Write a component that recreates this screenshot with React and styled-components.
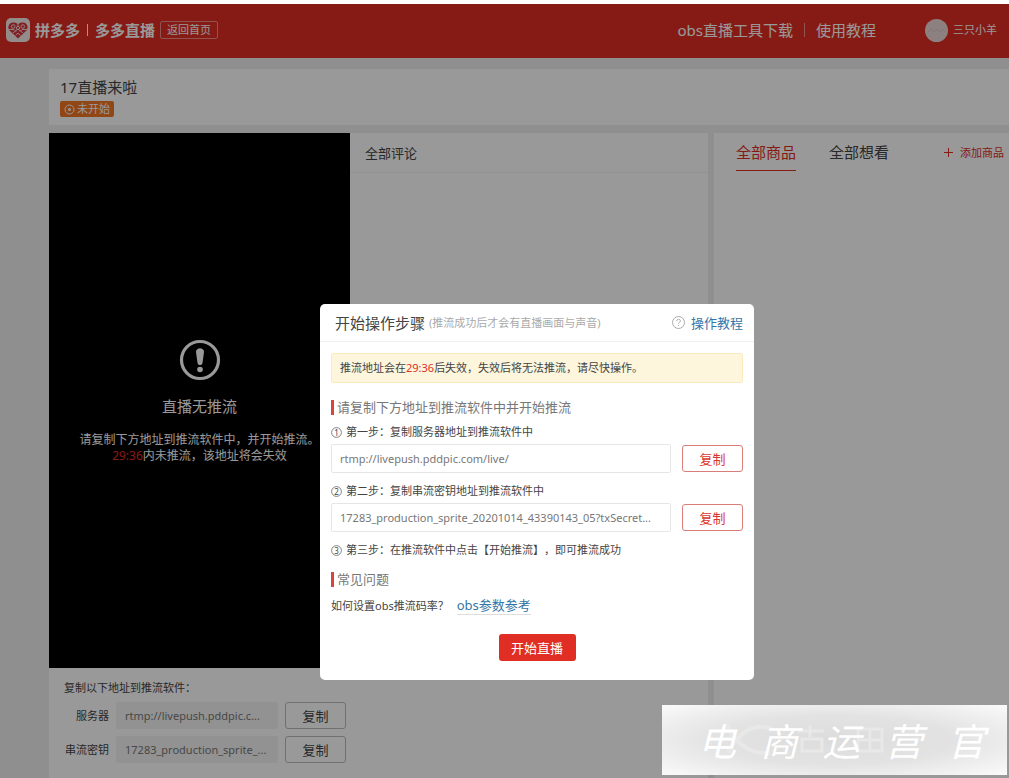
import React, { useState } from 'react';
import styled, { createGlobalStyle } from 'styled-components';

const GlobalStyle = createGlobalStyle`
  * {
    box-sizing: border-box;
  }

  body {
    margin: 0;
    background: #fff;
    color: #444;
    font-family: "Noto Sans", "Noto Sans CJK SC", sans-serif;
    font-size: 11px;
    line-height: 16px;
    text-spacing-trim: space-all;
  }

  h1, h2, h3, p, ol {
    margin: 0;
    padding: 0;
    font-weight: 400;
  }

  button, input {
    font-family: inherit;
  }

  a {
    text-decoration: none;
  }
`;

const Screen = styled.div`
  position: relative;
  display: flex;
  flex-direction: column;
  min-height: calc(100vh - 4px);
  margin-top: 4px;
  background: #eee;
  overflow: hidden;
`;

const HeaderBar = styled.header`
  display: flex;
  align-items: center;
  height: 54px;
  padding: 0 12px 2px 6px;
  background: #e02e24;
  color: #fff;
`;

const Brand = styled.div`
  display: flex;
  align-items: center;
  gap: 5px;
  font-size: 15px;
  font-weight: 700;
`;

const BrandDivider = styled.span`
  width: 1px;
  height: 12px;
  margin: 0 2px;
  background: #fff;
`;

const HomeButton = styled.button`
  height: 18px;
  margin-left: 5px;
  padding: 0 6px;
  border: 1px solid #f08a84;
  border-radius: 2px;
  background: none;
  color: #fff;
  font-size: 11px;
  line-height: 16px;
`;

const HeaderNav = styled.nav`
  display: flex;
  align-items: center;
  gap: 11px;
  margin-left: auto;
`;

const NavLink = styled.a`
  color: #fff;
  font-size: 15px;
  line-height: 24px;
`;

const NavDivider = styled.span`
  width: 1px;
  height: 14px;
  background: #f08a84;
`;

const User = styled.div`
  display: flex;
  align-items: center;
  gap: 5px;
  margin-left: 49px;
`;

const Avatar = styled.span`
  display: grid;
  place-items: center;
  width: 23px;
  height: 23px;
  border-radius: 50%;
  background: #ecd6d6;
`;

const Main = styled.main`
  flex: 1;
  display: flex;
  flex-direction: column;
  gap: 8px;
  padding: 11px 0 0 49px;
`;

const TitlePanel = styled.section`
  height: 56px;
  padding: 7px 11px;
  background: #fff;
`;

const LiveTitle = styled.h1`
  font-size: 15px;
  line-height: 22px;
`;

const StatusTag = styled.span`
  display: flex;
  align-items: center;
  gap: 2px;
  width: max-content;
  height: 16px;
  margin-top: 3px;
  padding: 0 4px;
  border-radius: 2px;
  background: #f27524;
  color: #fff;
`;

const Columns = styled.div`
  flex: 1;
  display: grid;
  grid-template-columns: minmax(0, 659fr) minmax(0, 295fr);
  gap: 6px;
`;

const LivePanel = styled.section`
  display: grid;
  grid-template-columns: 301px minmax(0, 1fr);
  grid-template-rows: 535px auto;
  background: #fff;
`;

const Video = styled.div`
  display: flex;
  flex-direction: column;
  align-items: center;
  padding-top: 206px;
  background: #000;
  color: #fff;
  font-size: 12px;
  text-align: center;
  white-space: nowrap;
`;

const VideoTitle = styled.h2`
  margin: 14px 0 15px;
  font-size: 15px;
  line-height: 22px;
`;

const Red = styled.span`
  color: #e02e24;
`;

const PanelTitle = styled.h2`
  height: 40px;
  padding: 0 15px;
  border-bottom: 1px solid #f4f4f4;
  font-size: 13px;
  line-height: 40px;
`;

const Addresses = styled.div`
  grid-column: 1 / -1;
  display: flex;
  flex-direction: column;
  gap: 7px;
  padding: 13px 15px;
  line-height: 14px;
`;

const AddressRow = styled.div`
  display: grid;
  grid-template-columns: 45px 162px 61px;
  align-items: center;
  column-gap: 7px;

  label {
    text-align: right;
  }
`;

const TextField = styled.input`
  min-width: 0;
  width: 100%;
  height: ${props => props.$filled ? '27px' : '29px'};
  padding: 0 8px;
  border: 1px solid ${props => props.$filled ? '#f4f4f4' : '#e6e6e6'};
  border-radius: 2px;
  background: ${props => props.$filled ? '#f4f4f4' : '#fff'};
  color: #777;
  font-size: 11px;
`;

const CopyButton = styled.button`
  height: 27px;
  padding: 0;
  border: 1px solid ${props => props.$primary ? '#d97d78' : '#bbb'};
  border-radius: 3px;
  background: #fff;
  color: ${props => props.$primary ? '#d9362e' : '#444'};
  font-size: 13px;
  line-height: 24px;
`;

const GoodsPanel = styled.section`
  padding: 0 5px 0 22px;
  background: #fff;
`;

const Tabs = styled.div`
  display: flex;
  gap: 33px;
`;

const Tab = styled.button`
  height: 38px;
  padding: 0;
  border: 0;
  border-bottom: 1px solid ${props => props.$active ? '#e02e24' : 'transparent'};
  background: none;
  color: ${props => props.$active ? '#e02e24' : '#444'};
  font-size: 15px;
  white-space: nowrap;
`;

const AddGoods = styled.button`
  display: flex;
  align-items: center;
  gap: 7px;
  margin-left: auto;
  padding: 0;
  border: 0;
  background: none;
  color: #e02e24;
  font-size: 11px;
  white-space: nowrap;
`;

const Mask = styled.div`
  position: absolute;
  inset: 0;
  display: flex;
  justify-content: center;
  align-items: flex-start;
  padding: 300px 0 0 65px;
  background: rgba(0, 0, 0, 0.4);
`;

const Dialog = styled.section`
  width: 434px;
  border-radius: 5px;
  background: #fff;
`;

const DialogHeader = styled.header`
  display: flex;
  align-items: center;
  height: 38px;
  padding: 0 11px 0 15px;
  border-bottom: 1px solid #f0f0f0;
`;

const DialogTitle = styled.h2`
  font-size: 15px;
  line-height: 22px;
`;

const DialogHint = styled.span`
  margin-left: 4px;
  color: #aaa;
`;

const HelpLink = styled.a`
  display: flex;
  align-items: center;
  gap: 6px;
  margin-left: auto;
  color: #3376a8;
  font-size: 13px;
`;

const DialogBody = styled.div`
  display: flex;
  flex-direction: column;
  padding: 11px 11px 19px;
`;

const Alert = styled.p`
  height: 30px;
  margin-bottom: 14px;
  padding: 0 8px;
  border: 1px solid #faebbf;
  border-radius: 2px;
  background: #fdf5dc;
  line-height: 28px;
`;

const SectionTitle = styled.h3`
  display: flex;
  align-items: center;
  gap: 3px;
  color: #777;
  font-size: 13px;
  line-height: 20px;

  &::before {
    content: "";
    width: 3px;
    height: 15px;
    background: #d9453c;
  }
`;

const Steps = styled.ol`
  display: flex;
  flex-direction: column;
  gap: 10px;
  margin: 7px 0 11px;
  list-style: none;
`;

const StepLabel = styled.label`
  display: flex;
  align-items: center;
  gap: 4px;
`;

const StepField = styled.div`
  display: grid;
  grid-template-columns: minmax(0, 1fr) 61px;
  align-items: center;
  gap: 11px;
  margin-top: 4px;
`;

const Faq = styled.p`
  display: flex;
  align-items: center;
  gap: 8px;
  margin-top: 7px;
`;

const FaqLink = styled.a`
  border-bottom: 1px solid #ddd;
  color: #3376a8;
  font-size: 13px;
  line-height: 18px;
`;

const StartButton = styled.button`
  align-self: center;
  width: 77px;
  height: 27px;
  margin-top: 19px;
  padding: 0;
  border: 0;
  border-radius: 3px;
  background: #e02e24;
  color: #fff;
  font-size: 13px;
`;

const Watermark = styled.div`
  position: absolute;
  right: 2px;
  bottom: 3px;
  width: 345px;
  height: 70px;
  background: radial-gradient(ellipse at center, #dcdcdc 0%, #e3e3e3 50%, #fafafa 100%);
`;

const WatermarkBack = styled.svg`
  position: absolute;
  inset: 0;
  width: 100%;
  height: 100%;
`;

const WatermarkText = styled.div`
  position: relative;
  display: flex;
  justify-content: space-between;
  padding: 0 22px 0 36px;
  color: #fff;
  font-family: "Noto Sans CJK SC", sans-serif;
  font-size: 38px;
  font-style: italic;
  line-height: 70px;
`;

const SERVER = 'rtmp://livepush.pddpic.com/live/';
const STREAM_KEY = '17283_production_sprite_20201014_43390143_05?txSecret=8c1f2a';

const shorten = (text, length) => `${text.slice(0, length)}...`;

function BrandLogo() {
  return (
    <svg width="24" height="24" viewBox="0 0 24 24" aria-hidden="true">
      <rect width="24" height="24" rx="5" fill="#f3e9e8" />
      <path d="M12 20.500 3.500 12.400C1 9.200 3 4.500 7 4.500c2.200 0 4 .6 5 1.800 1-1.200 2.800-1.800 5-1.800 4 0 6 4.700 3.500 7.900z" fill="#d7343c" />
      <g fill="none" stroke="#f3e9e8" strokeWidth="0.900">
        <path d="m7 15 5-4 5 4M9.500 17.500 12 15l2.500 2.500M12 4.500v4M3 11.500h5l2 2M21 11.500h-5l-2 2" />
        <circle cx="12" cy="10" r="1.600" />
        <circle cx="7.200" cy="8.500" r="1.800" />
        <circle cx="16.800" cy="8.500" r="1.800" />
      </g>
    </svg>
  );
}

function StepMark({ children }) {
  return (
    <svg width="11" height="11" viewBox="0 0 11 11">
      <circle cx="5.500" cy="5.500" r="4.900" fill="none" stroke="#666" strokeWidth="0.800" />
      <text x="5.500" y="8.500" textAnchor="middle" fontSize="8" fill="#444">{children}</text>
    </svg>
  );
}

function Header() {
  return (
    <HeaderBar>
      <Brand>
        <BrandLogo />
        拼多多
        <BrandDivider />
        多多直播
      </Brand>
      <HomeButton>返回首页</HomeButton>
      <HeaderNav>
        <NavLink href="#download">obs直播工具下载</NavLink>
        <NavDivider />
        <NavLink href="#guide">使用教程</NavLink>
      </HeaderNav>
      <User>
        <Avatar>
          <svg width="19" height="7" viewBox="0 0 19 7" fill="none" stroke="#dfc4c4">
            <path d="M1 5 4 2l3 3 3-3 3 3 3-3 2 3" />
          </svg>
        </Avatar>
        三只小羊
      </User>
    </HeaderBar>
  );
}

function LiveColumn() {
  return (
    <LivePanel>
      <Video>
        <svg width="42" height="42" viewBox="0 0 42 42" aria-hidden="true">
          <circle cx="21" cy="21" r="18.500" fill="none" stroke="#fff" strokeWidth="3.200" />
          <path d="M17 13c0-5 8-5 8 0l-1.500 11c-.4 2.700-4.600 2.700-5 0z" fill="#fff" />
          <circle cx="21" cy="30.500" r="2.800" fill="#fff" />
        </svg>
        <VideoTitle>直播无推流</VideoTitle>
        <p>请复制下方地址到推流软件中，并开始推流。</p>
        <p><Red>29:36</Red>内未推流，该地址将会失效</p>
      </Video>
      <PanelTitle>全部评论</PanelTitle>
      <Addresses>
        <p>复制以下地址到推流软件：</p>
        <AddressRow>
          <label htmlFor="side-server">服务器</label>
          <TextField id="side-server" $filled readOnly value={shorten(SERVER, 24)} />
          <CopyButton>复制</CopyButton>
        </AddressRow>
        <AddressRow>
          <label htmlFor="side-key">串流密钥</label>
          <TextField id="side-key" $filled readOnly value={shorten(STREAM_KEY, 24)} />
          <CopyButton>复制</CopyButton>
        </AddressRow>
      </Addresses>
    </LivePanel>
  );
}

function GoodsColumn() {
  const [tab, setTab] = useState('全部商品');

  return (
    <GoodsPanel>
      <Tabs>
        {['全部商品', '全部想看'].map(name => (
          <Tab key={name} $active={tab === name} onClick={() => setTab(name)}>{name}</Tab>
        ))}
        <AddGoods>
          <svg width="9" height="9" viewBox="0 0 9 9" stroke="currentColor" aria-hidden="true">
            <path d="M0 4.500h9M4.500 0v9" />
          </svg>
          添加商品
        </AddGoods>
      </Tabs>
    </GoodsPanel>
  );
}

function StartDialog() {
  return (
    <Dialog role="dialog" aria-labelledby="dialog-title">
      <DialogHeader>
        <DialogTitle id="dialog-title">开始操作步骤</DialogTitle>
        <DialogHint>(推流成功后才会有直播画面与声音)</DialogHint>
        <HelpLink href="#help">
          <svg width="13" height="13" viewBox="0 0 13 13" fill="none" stroke="#aaa" aria-hidden="true">
            <circle cx="6.500" cy="6.500" r="6" />
            <path d="M4.700 5.200c0-2.600 3.700-2.400 3.700-.2 0 1.400-1.900 1.400-1.900 2.800M6.500 9v1" />
          </svg>
          操作教程
        </HelpLink>
      </DialogHeader>
      <DialogBody>
        <Alert>推流地址会在<Red>29:36</Red>后失效，失效后将无法推流，请尽快操作。</Alert>
        <SectionTitle>请复制下方地址到推流软件中并开始推流</SectionTitle>
        <Steps>
          <li>
            <StepLabel htmlFor="server"><StepMark>1</StepMark>第一步：复制服务器地址到推流软件中</StepLabel>
            <StepField>
              <TextField id="server" readOnly value={SERVER} />
              <CopyButton $primary>复制</CopyButton>
            </StepField>
          </li>
          <li>
            <StepLabel htmlFor="key"><StepMark>2</StepMark>第二步：复制串流密钥地址到推流软件中</StepLabel>
            <StepField>
              <TextField id="key" readOnly value={shorten(STREAM_KEY, 53)} />
              <CopyButton $primary>复制</CopyButton>
            </StepField>
          </li>
          <li>
            <StepLabel as="p"><StepMark>3</StepMark>第三步：在推流软件中点击【开始推流】，即可推流成功</StepLabel>
          </li>
        </Steps>
        <SectionTitle>常见问题</SectionTitle>
        <Faq>
          如何设置obs推流码率？
          <FaqLink href="#params">obs参数参考</FaqLink>
        </Faq>
        <StartButton>开始直播</StartButton>
      </DialogBody>
    </Dialog>
  );
}

function App() {
  return (
    <Screen>
      <GlobalStyle />
      <Header />
      <Main>
        <TitlePanel>
          <LiveTitle>17直播来啦</LiveTitle>
          <StatusTag>
            <svg width="11" height="11" viewBox="0 0 11 11" fill="none" stroke="#fff" aria-hidden="true">
              <circle cx="5.500" cy="5.500" r="4.500" />
              <circle cx="5.500" cy="5.500" r="1.500" fill="#fff" stroke="none" />
            </svg>
            未开始
          </StatusTag>
        </TitlePanel>
        <Columns>
          <LiveColumn />
          <GoodsColumn />
        </Columns>
      </Main>
      <Mask>
        <StartDialog />
      </Mask>
      <Watermark>
        <WatermarkBack viewBox="0 0 345 70" fill="none" stroke="#e8e8e8" strokeWidth="4" aria-hidden="true">
          <path d="M64 18q14 32 44 30M66 48q18-34 44-24" />
          <path d="M136 26h26M148 20v12M140 34h20v12h-20zM196 24h24v22h-24zM208 24v22M196 35h24" strokeWidth="3" />
        </WatermarkBack>
        <WatermarkText>
          {[...'电商运营官'].map(char => <span key={char}>{char}</span>)}
        </WatermarkText>
      </Watermark>
    </Screen>
  );
}

export default App;
